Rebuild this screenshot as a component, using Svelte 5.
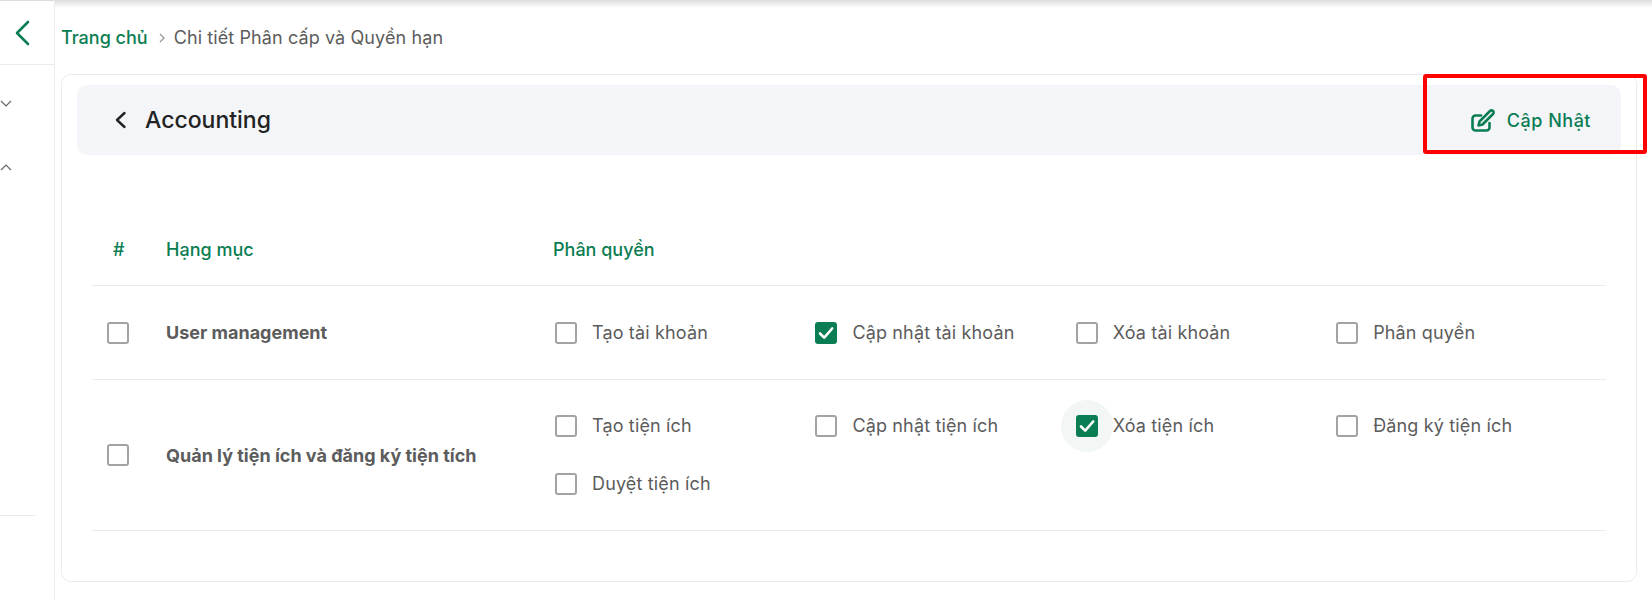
<script>
  const rows = [
    {
      name: 'User management',
      perms: [
        { label: 'Tạo tài khoản' },
        { label: 'Cập nhật tài khoản', checked: true },
        { label: 'Xóa tài khoản' },
        { label: 'Phân quyền' }
      ]
    },
    {
      name: 'Quản lý tiện ích và đăng ký tiện tích',
      perms: [
        { label: 'Tạo tiện ích' },
        { label: 'Cập nhật tiện ích' },
        { label: 'Xóa tiện ích', checked: true, focus: true },
        { label: 'Đăng ký tiện ích' },
        { label: 'Duyệt tiện ích' }
      ]
    }
  ];
</script>

{#snippet box(checked)}
  <span class="box" class:checked>
    {#if checked}
      <svg viewBox="0 0 22 22" width="22" height="22"><path d="M5 11.500l4.200 4.200 8-9.200" fill="none" stroke="#fff" stroke-width="2.6" stroke-linecap="round" stroke-linejoin="round"/></svg>
    {/if}
  </span>
{/snippet}

<div class="page">
  <aside class="sidebar">
    <div class="side-top">
      <svg viewBox="0 0 18 26" width="18" height="26"><path d="M15 2L4 13l11 11" fill="none" stroke="#0b7d52" stroke-width="2.6" stroke-linecap="round" stroke-linejoin="round"/></svg>
    </div>
    <div class="side-menu">
      <svg viewBox="0 0 12 8" width="12" height="8"><path d="M1 1l5 5 5-5" fill="none" stroke="#666" stroke-width="1.2"/></svg>
      <svg viewBox="0 0 12 8" width="12" height="8"><path d="M1 7l5-5 5 5" fill="none" stroke="#666" stroke-width="1.2"/></svg>
    </div>
  </aside>

  <main class="content">
    <nav class="crumbs">
      <span class="home">Trang chủ</span>
      <svg viewBox="0 0 8 12" width="8" height="12"><path d="M2 2l4 4-4 4" fill="none" stroke="#999" stroke-width="1.3"/></svg>
      <span class="current">Chi tiết Phân cấp và Quyền hạn</span>
    </nav>

    <section class="card">
      <header class="panel">
        <div class="title">
          <svg viewBox="0 0 14 20" width="14" height="20"><path d="M11.500 3L4 10l7.500 7" fill="none" stroke="#222" stroke-width="2.4" stroke-linecap="round" stroke-linejoin="round"/></svg>
          <h1>Accounting</h1>
        </div>
        <button class="update">
          <svg viewBox="0 0 24 24" width="24" height="24" fill="none" stroke="#0b7d52" stroke-width="2.6" stroke-linecap="round" stroke-linejoin="round">
            <path d="M10 7.500H4.500a3 3 0 0 0-3 3v9a3 3 0 0 0 3 3h11a3 3 0 0 0 3-3V15"/>
            <path d="M19 3a2.100 2.100 0 0 1 3 3L11.500 16.500l-4 1 1-4z"/>
          </svg>
          <span>Cập Nhật</span>
        </button>
      </header>

      <div class="table">
        <div class="row head">
          <div class="col-check hash">#</div>
          <div class="col-name">Hạng mục</div>
          <div class="col-perms">Phân quyền</div>
        </div>
        {#each rows as row}
          <div class="row">
            <div class="col-check">{@render box(false)}</div>
            <div class="col-name strong">{row.name}</div>
            <div class="col-perms grid">
              {#each row.perms as perm}
                <div class="perm" class:focus={perm.focus}>
                  {@render box(perm.checked)}
                  <span class="label">{perm.label}</span>
                </div>
              {/each}
            </div>
          </div>
        {/each}
      </div>
    </section>
  </main>

  <div class="redbox"></div>
</div>

<style>
  :global(body) {
    margin: 0;
    background: #fff;
  }

  .page {
    position: relative;
    display: flex;
    height: 600px;
    overflow: hidden;
    font-family: Inter, "Noto Sans", sans-serif;
    font-size: 18px;
    color: #5c5c5c;
  }

  .sidebar {
    width: 55px;
    flex-shrink: 0;
    border-right: 1px solid #ebebeb;
    border-top: 1px solid #ddd;
    box-sizing: border-box;
  }

  .side-top {
    height: 64px;
    border-bottom: 1px solid #ebebeb;
    display: flex;
    align-items: center;
    padding: 1px 0 0 13px;
    box-sizing: border-box;
  }

  .side-menu {
    display: flex;
    flex-direction: column;
    gap: 55px;
    height: 451px;
    padding-top: 35px;
    box-sizing: border-box;
    border-bottom: 1px solid #ebebeb;
    margin-right: 18px;
  }

  .side-menu svg {
    display: block;
  }

  .content {
    flex: 1;
    padding: 0 15px 0 6px;
    min-width: 0;
    /* shadow of the top bar, which is cropped out of the shot */
    background: linear-gradient(#dcdcdc, #fff 8px);
  }

  .crumbs {
    height: 74px;
    display: flex;
    align-items: center;
    gap: 10px;
    padding-top: 1px;
    box-sizing: border-box;
  }

  .home {
    color: #0b7d52;
    font-weight: 500;
  }

  .current {
    margin-left: -2px;
    letter-spacing: 0.1px;
  }

  .card {
    height: 508px;
    box-sizing: border-box;
    border: 1px solid #ebebeb;
    border-radius: 10px;
    padding: 10px 15px;
  }

  .panel {
    height: 70px;
    background: #f3f5f9;
    border-radius: 10px;
    display: flex;
    align-items: center;
    justify-content: space-between;
    padding: 0 30px 0 36px;
  }

  .title {
    display: flex;
    align-items: center;
    gap: 18px;
  }

  h1 {
    margin: 0;
    font-size: 23px;
    font-weight: 500;
    color: #222;
  }

  .update {
    display: flex;
    align-items: center;
    gap: 12px;
    border: none;
    background: none;
    padding: 0;
    font: inherit;
    font-weight: 500;
    letter-spacing: 0.5px;
    color: #0b7d52;
  }

  .table {
    margin: 60px 15px 0;
  }

  .row {
    display: flex;
    align-items: center;
    border-bottom: 1px solid #ebebeb;
  }

  .head {
    height: 68px;
    padding-bottom: 2px;
    color: #0b7d52;
    font-weight: 500;
  }

  .col-check {
    width: 74px;
    padding-left: 15px;
    box-sizing: border-box;
    flex-shrink: 0;
  }

  .hash {
    padding-left: 21px;
  }

  .col-name {
    width: 387px;
    flex-shrink: 0;
  }

  .strong {
    font-weight: 700;
  }

  .col-perms {
    flex: 1;
  }

  .grid {
    display: grid;
    grid-template-columns: repeat(4, 260.4px);
    row-gap: 14px;
    padding: 25px 0 24px 2px;
  }

  .row:last-child .grid {
    padding-top: 24px;
  }

  .perm {
    position: relative;
    isolation: isolate;
    display: flex;
    align-items: center;
    gap: 15px;
    height: 44px;
  }

  .focus::before {
    content: '';
    position: absolute;
    left: -15px;
    top: -4px;
    width: 52px;
    height: 52px;
    border-radius: 50%;
    background: #f2f6f4;
    z-index: -1;
  }

  .label {
    padding-bottom: 2px;
    letter-spacing: 0.15px;
  }

  .box {
    width: 22px;
    height: 22px;
    box-sizing: border-box;
    border: 2px solid #a3a3a3;
    border-radius: 3px;
    display: block;
    flex-shrink: 0;
  }

  .box.checked {
    background: #0b7d52;
    border: none;
  }

  .box svg {
    display: block;
  }

  .redbox {
    position: absolute;
    left: 1423px;
    top: 74px;
    width: 224px;
    height: 80px;
    box-sizing: border-box;
    border: 4px solid #f00;
    border-radius: 3px;
  }
</style>
